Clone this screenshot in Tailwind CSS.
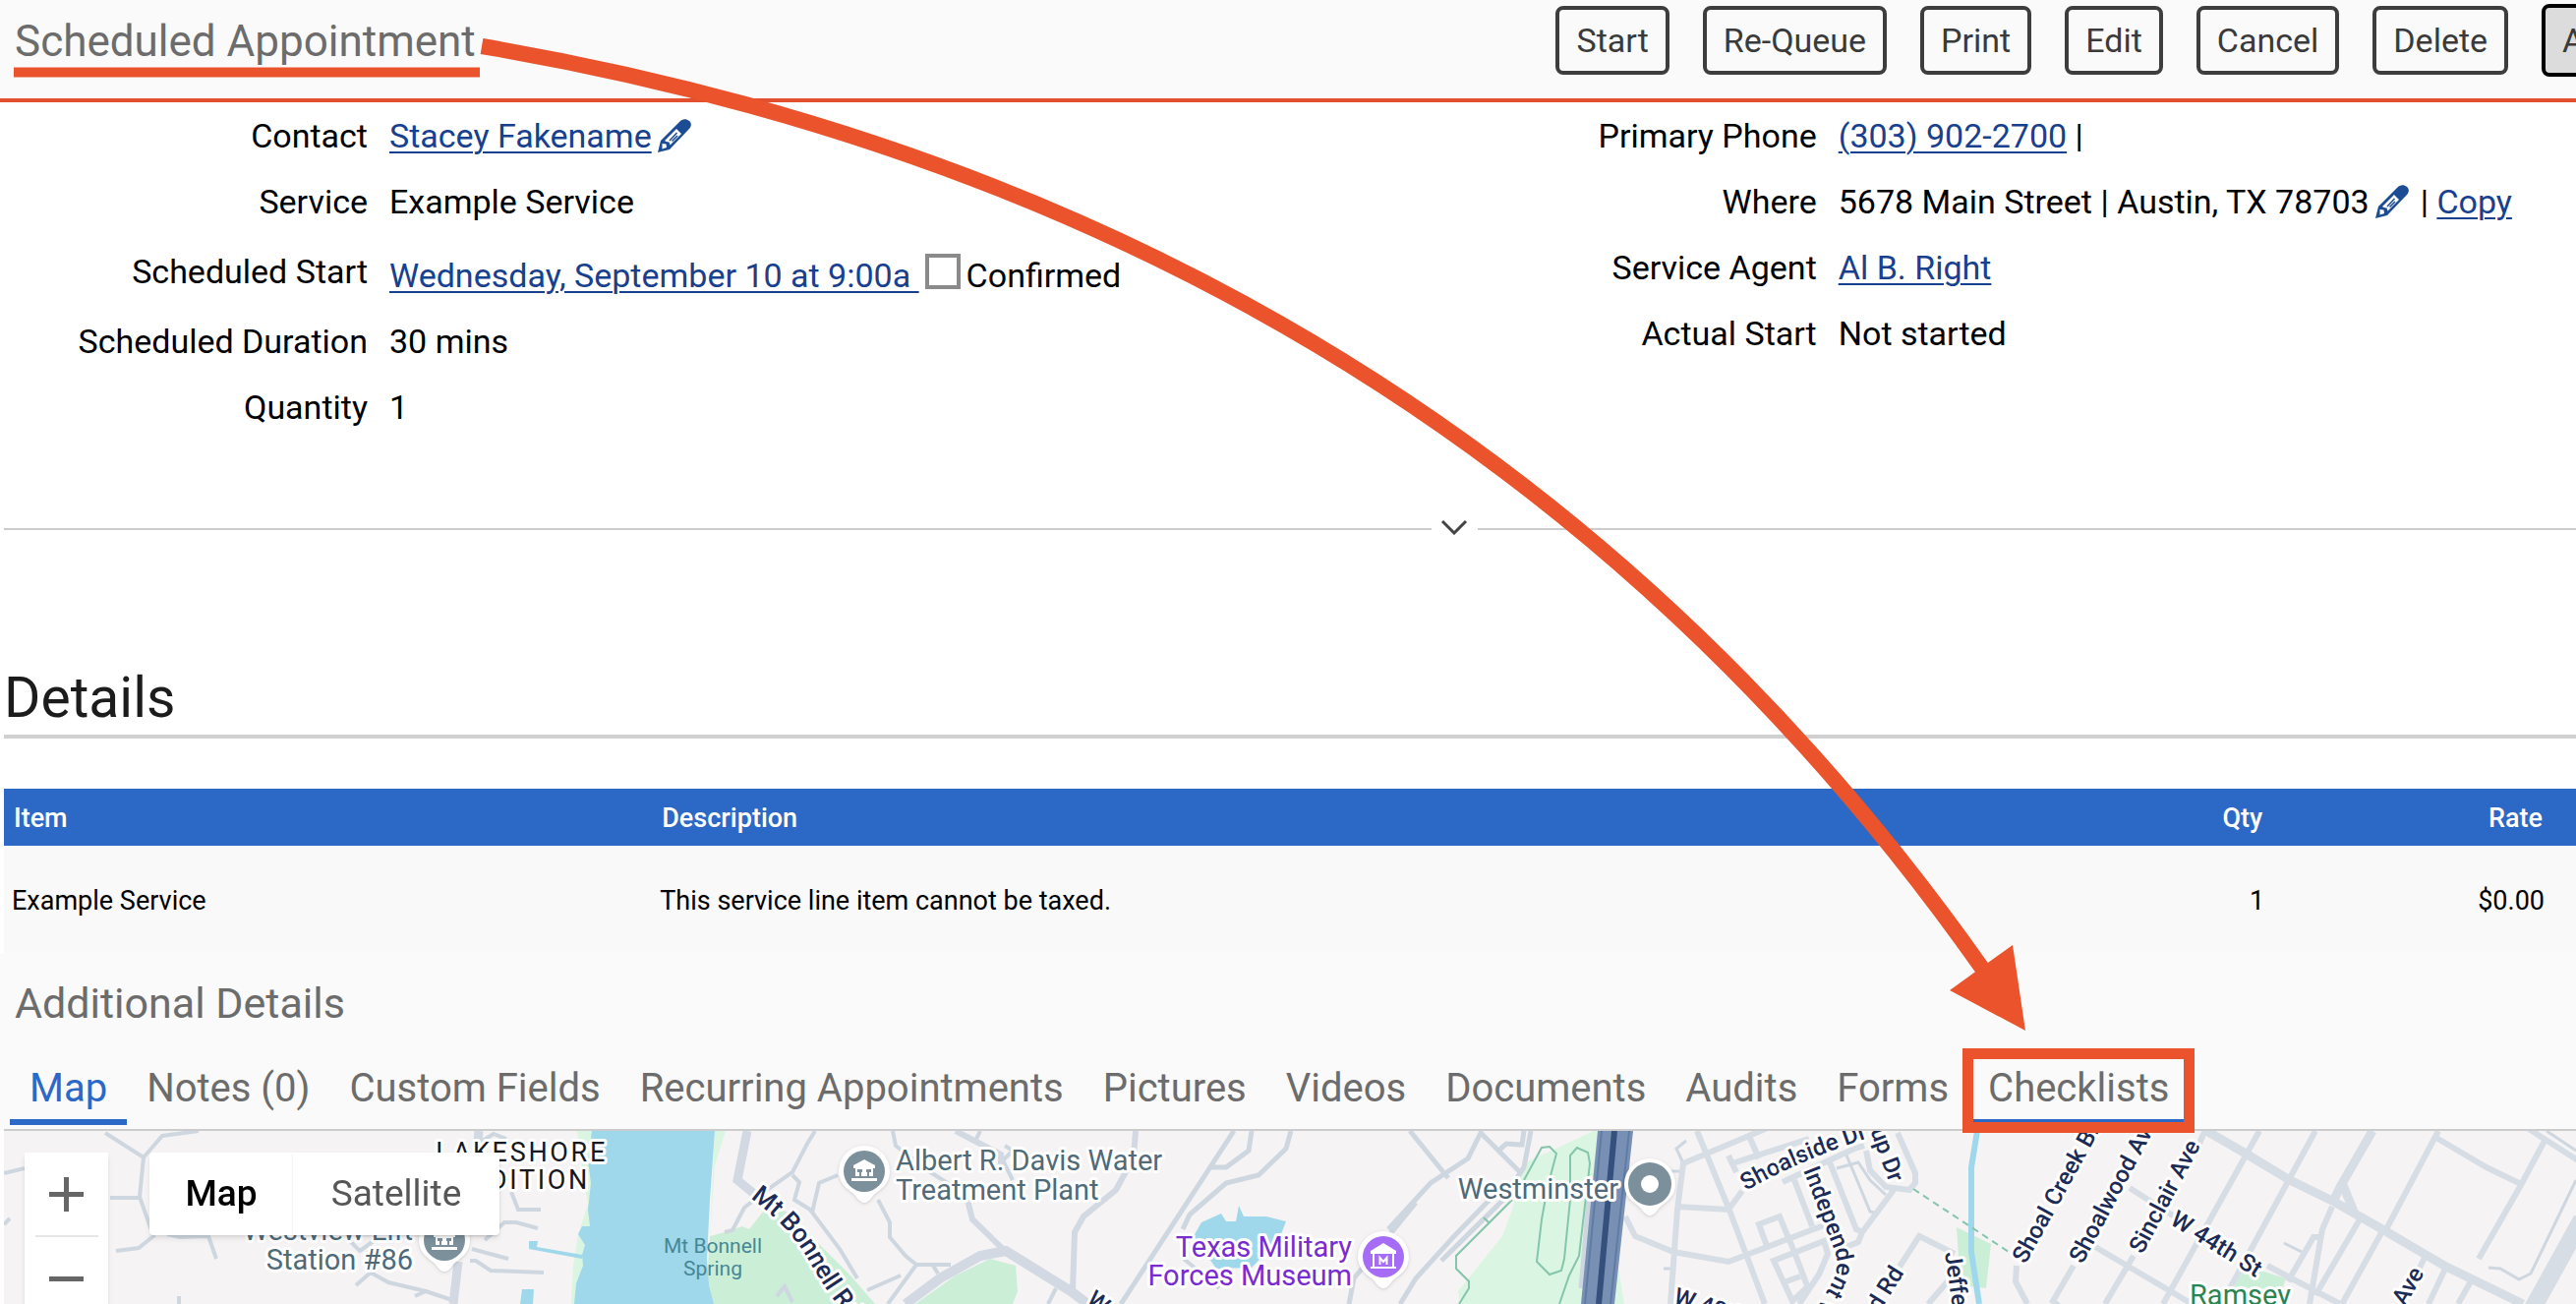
<!DOCTYPE html>
<html lang="en">
<head>
  <meta charset="UTF-8" />
  <meta name="viewport" content="width=device-width, initial-scale=1.0" />
  <title>Scheduled Appointment</title>
  <script src="https://cdn.jsdelivr.net/npm/@tailwindcss/browser@4"></script>
</head>
<body class="relative min-h-screen overflow-x-hidden bg-white font-[Roboto,sans-serif] text-[34px] leading-10 text-black">
  <!-- Icon shapes used more than once -->
  <svg class="hidden">
    <symbol id="pencil" viewBox="0 0 34 34">
      <path d="M0 34 3 22 22 3C25-.5 29-.5 32 2s2 6-.5 8.500L12 31Z" fill="#1c4c93" />
      <path d="M7 22 19 10l5 5L12.500 26.500l-1-3-3-.500Z" fill="#fff" />
      <path d="m12 22 7.500-8M14.500 22.500 20 17" stroke="#1c4c93" stroke-width="1.500" />
      <path d="m4.500 25 4 .500.500 3.500-4.500 1.500Z" fill="#fff" />
    </symbol>
    <symbol id="pin" viewBox="0 0 56 64">
      <path d="M28 2a26 26 0 0 1 26 26c0 11-7 17-14 22-4 3-7 10-12 10s-8-7-12-10C9 45 2 39 2 28A26 26 0 0 1 28 2Z" fill="#fff" />
    </symbol>
    <symbol id="civic" viewBox="0 0 26 24">
      <path d="M13 0 24 6v3H2V6ZM4 9h18v8H4ZM0 19h26v3H0Z" fill="#fff" />
      <path d="M6 10h5v3H6zM15 10h5v3h-5zM8 13h2v5H8zM16 13h2v5h-2z" fill="#7b909b" />
    </symbol>
  </svg>

  <header class="flex h-[104px] items-start overflow-hidden border-b-4 border-[#e2502f] bg-[#fafafa]">
    <h1 class="w-[60.4%] shrink-0 pl-[15px] pt-4 text-[44px] leading-[52px] text-[#6c6c6c]">Scheduled Appointment</h1>
    <div class="flex shrink-0 items-center gap-[34px] pt-1 text-[#3a3a3a]">
      <button class="h-[70px] rounded-lg border-4 border-[#3d3d3d] px-[17px]">Start</button>
      <button class="h-[70px] rounded-lg border-4 border-[#3d3d3d] px-[17px]">Re-Queue</button>
      <button class="h-[70px] rounded-lg border-4 border-[#3d3d3d] px-[17px]">Print</button>
      <button class="h-[70px] rounded-lg border-4 border-[#3d3d3d] px-[17px]">Edit</button>
      <button class="h-[70px] rounded-lg border-4 border-[#3d3d3d] px-[17px]">Cancel</button>
      <button class="h-[70px] rounded-lg border-4 border-[#3d3d3d] px-[17px]">Delete</button>
      <button class="h-[74px] rounded-lg border-4 border-black bg-[#dcdcdc] px-[17px]">Actions</button>
    </div>
  </header>

  <main>
    <section class="grid grid-cols-[56.25%_1fr] items-start">
      <dl>
        <div class="flex h-[67px] items-center gap-[22px]">
          <dt class="w-[374px] shrink-0 text-right">Contact</dt>
          <dd class="flex items-center gap-[6px]"><a href="#" class="text-[#17408f] underline decoration-2 underline-offset-4">Stacey Fakename</a><a href="#" aria-label="Edit contact"><svg class="size-[34px]"><use href="#pencil" /></svg></a></dd>
        </div>
        <div class="flex h-[67px] items-center gap-[22px]">
          <dt class="w-[374px] shrink-0 text-right">Service</dt>
          <dd>Example Service</dd>
        </div>
        <div class="flex h-[75px] items-center gap-[22px]">
          <dt class="w-[374px] shrink-0 text-right">Scheduled Start</dt>
          <dd class="flex items-center pt-2">
            <a href="#" class="whitespace-pre text-[#17408f] underline decoration-2 underline-offset-4">Wednesday, September 10 at 9:00a </a>
            <input id="confirmed" type="checkbox" class="mx-[6px] mb-2 size-9 appearance-none border-4 border-[#8a8a8a] bg-white" />
            <label for="confirmed">Confirmed</label>
          </dd>
        </div>
        <div class="flex h-[67px] items-center gap-[22px]">
          <dt class="w-[374px] shrink-0 text-right">Scheduled Duration</dt>
          <dd>30 mins</dd>
        </div>
        <div class="flex h-[67px] items-center gap-[22px]">
          <dt class="w-[374px] shrink-0 text-right">Quantity</dt>
          <dd>1</dd>
        </div>
      </dl>
      <dl>
        <div class="flex h-[67px] items-center gap-[22px]">
          <dt class="w-[374px] shrink-0 text-right">Primary Phone</dt>
          <dd><a href="#" class="text-[#17408f] underline decoration-2 underline-offset-4">(303) 902-2700</a> |</dd>
        </div>
        <div class="flex h-[67px] items-center gap-[22px]">
          <dt class="w-[374px] shrink-0 text-right">Where</dt>
          <dd class="flex items-center whitespace-nowrap">5678 Main Street | Austin, TX 78703<a href="#" aria-label="Edit address" class="ml-[6px] mr-3"><svg class="size-[34px]"><use href="#pencil" /></svg></a><span>| <a href="#" class="text-[#17408f] underline decoration-2 underline-offset-4">Copy</a></span></dd>
        </div>
        <div class="flex h-[67px] items-center gap-[22px]">
          <dt class="w-[374px] shrink-0 text-right">Service Agent</dt>
          <dd><a href="#" class="text-[#17408f] underline decoration-2 underline-offset-4">Al B. Right</a></dd>
        </div>
        <div class="flex h-[67px] items-center gap-[22px]">
          <dt class="w-[374px] shrink-0 text-right">Actual Start</dt>
          <dd>Not started</dd>
        </div>
      </dl>
    </section>

    <!-- Expand divider -->
    <div class="mt-[77px] flex h-7 items-center pl-1">
      <span class="h-[2px] w-[55.5%] bg-[#cccccc]"></span>
      <button aria-label="Show more" class="flex w-[47px] justify-center pb-1">
        <svg class="h-4 w-7" viewBox="0 0 28 16" fill="none" stroke="#444" stroke-width="3"><path d="m2 2 12 12L26 2" /></svg>
      </button>
      <span class="h-[2px] flex-1 bg-[#cccccc]"></span>
    </div>

    <section class="pl-1 pt-[124px]">
      <h2 class="border-b-4 border-[#d0d0d0] pb-1 text-[57px] leading-[67px] text-[#1c1c1c]">Details</h2>
      <table class="mt-[51px] w-full table-fixed text-[27px]">
        <colgroup>
          <col class="w-[25.2%]" />
          <col class="w-[50.4%]" />
          <col class="w-[12.6%]" />
          <col class="w-[11.8%]" />
        </colgroup>
        <thead>
          <tr class="h-[58px] bg-[#2c68c5] text-left text-white">
            <th class="px-[10px] pt-[2px] font-medium">Item</th>
            <th class="px-[10px] pt-[2px] font-medium">Description</th>
            <th class="px-[10px] pt-[2px] text-right font-medium">Qty</th>
            <th class="px-[34px] pt-[2px] text-right font-medium">Rate</th>
          </tr>
        </thead>
        <tbody>
          <tr class="h-[109px] bg-[#f9f9f9]">
            <td class="px-2 pt-[2px]">Example Service</td>
            <td class="px-2 pt-[2px]">This service line item cannot be taxed.</td>
            <td class="px-2 pt-[2px] text-right">1</td>
            <td class="px-8 pt-[2px] text-right">$0.00</td>
          </tr>
        </tbody>
      </table>
    </section>

    <section class="bg-[#fafafa]">
      <h2 class="h-[99px] pl-[15px] pt-[25px] text-[43px] leading-[52px] text-[#6c6c6c]">Additional Details</h2>
      <nav class="ml-1 flex h-[82px] items-start border-b-2 border-[#cccccc] pl-[6px] text-[40px] text-[#6c6c6c]">
        <a href="#" class="h-[76px] border-b-[6px] border-[#2c68c5] px-5 pt-4 leading-[46px] text-[#2c68c5]">Map</a>
        <a href="#" class="h-[76px] px-5 pt-4 leading-[46px]">Notes (0)</a>
        <a href="#" class="h-[76px] px-5 pt-4 leading-[46px]">Custom Fields</a>
        <a href="#" class="h-[76px] px-5 pt-4 leading-[46px]">Recurring Appointments</a>
        <a href="#" class="h-[76px] px-5 pt-4 leading-[46px]">Pictures</a>
        <a href="#" class="h-[76px] px-5 pt-4 leading-[46px]">Videos</a>
        <a href="#" class="h-[76px] px-5 pt-4 leading-[46px]">Documents</a>
        <a href="#" class="h-[76px] px-5 pt-4 leading-[46px]">Audits</a>
        <a href="#" class="h-[76px] px-5 pt-4 leading-[46px]">Forms</a>
        <a href="#" class="relative h-[76px] border-b-[6px] border-[#2c68c5] px-5 pt-4 leading-[46px]">Checklists<span class="absolute -inset-x-[6px] -top-[2px] z-10 h-[86px] border-[11px] border-[#ea532c]"></span></a>
      </nav>
    </section>

    <!-- Map -->
    <section class="relative ml-1 h-44 overflow-hidden bg-[#f5f3f4]">
      <svg class="h-[176px] w-[2616px] font-[Roboto,sans-serif]" viewBox="4 1150 2616 176" fill="none">
        <!-- parks -->
        <path d="M780 1227 800 1232 830 1262 865 1297 890 1326H726L719 1303 722 1257 737 1253 755 1247 762 1250ZM931 1326 972 1297 1007 1280 1033 1287 1035 1313 1030 1326ZM1990 1248 2025 1265 2020 1310 1994 1307ZM2284 1287 2325 1300 2321 1312 2272 1309Z" fill="#cbeed7" />
        <path d="M1621 1150 1550 1183 1538 1230 1528 1257 1483 1313 1485 1326H1612L1625 1150ZM587 1150H602V1326H581L583 1287 588 1255 598 1225 594 1200ZM727 1150H738L727 1185 722 1260ZM1646 1290 1640 1326H1652Z" fill="#daf6e2" />
        <!-- water -->
        <path d="M602 1150H727L722 1220 719 1280 721 1307 726 1326H584L586 1305 593 1287 592 1276 595 1266 588 1255 592 1247H600L598 1230 601 1203 598 1180ZM1214 1257 1222 1243 1242 1234 1247 1242H1257L1260 1226 1265 1237H1288L1308 1242 1301 1260 1273 1289 1237 1290ZM531 1311H543L542 1326H529ZM538 1262H547L546 1268 592 1276V1280L538 1270Z" fill="#9fd8eb" />
        <path d="M2011 1150 2005 1187V1273L2013 1326" stroke="#9fd8eb" stroke-width="6" />
        <!-- small streets -->
        <g stroke="#ced7e0" stroke-width="4">
          <path d="M107 1152 146 1177 165 1155 202 1150M146 1177 142 1217 156 1257 141 1269 118 1272M112 1218H142M4 1193 25 1188M4 1245 10 1239M170 1255 183 1258 212 1257 220 1280M486 1163 502 1153 515 1158M520 1212 527 1230H550M493 1261 513 1243H525L547 1249M480 1270 517 1280M478 1282H484L499 1292 553 1294M362 1307 377 1294 395 1304 433 1313 460 1322M422 1318 433 1313M182 1318V1326M357 1263 366 1272 380 1262" />
          <path d="M829 1150 821 1163 806 1192 780 1210 757 1228 745 1251 737 1253M806 1195 813 1202 808 1220 824 1230 854 1270 872 1300M826 1233 833 1203 852 1195M893 1220 905 1243V1258L921 1277 932 1286H967M932 1286 903 1326M916 1297 882 1312M949 1287 954 1295M908 1150 911 1165 940 1188 970 1207M992 1160 997 1150M1022 1165 1030 1170 1020 1180 1030 1200M790 1318 798 1308 806 1324M1066 1326 1074 1310M1204 1280 1240 1310" />
          <path d="M1255 1150 1140 1326M1273 1150 1270 1170 1247 1187H1229M1313 1150 1308 1168 1280 1195 1247 1203 1210 1235 1203 1250M1440 1223 1377 1300 1372 1326M1434 1150 1473 1198M1507 1150 1493 1178 1455 1203 1412 1250M1507 1153 1546 1192M1524 1170 1532 1163 1548 1164 1550 1150M1557 1150 1550 1187 1538 1205M1515 1220 1479 1257 1440 1300 1424 1326M1534 1215 1466 1282M1616 1220 1608 1310" stroke-width="5" />
          <path d="M1712 1183 1705 1168 1715 1160M1710 1191H1700M1692 1290H1699M1876 1170 1890 1203 1902 1232 1910 1234M1868 1188 1890 1182 1902 1200 1918 1215M2323 1264 2341 1273M2531 1289 2543 1290 2562 1301 2574 1295 2620 1200M2590 1150 2620 1170" stroke-width="3" />
        </g>
        <!-- main streets -->
        <g stroke="#d7dde4" stroke-width="6">
          <path d="M487 1150 485 1172M466 1283 461 1326M760 1150 750 1200 767 1214" stroke-width="9" stroke="#d2d9e2" />
          <path d="M972 1150 1018 1174V1190M984 1220 989 1240 1020 1270M1155 1150 1153 1177 1135 1210 1102 1237 1093 1253 1091 1312" stroke="#d2d9e2" />
          <path d="M921 1326 956 1300 997 1277 1023 1272 1089 1313 1109 1328" stroke-width="10" stroke="#d2d9e2" />
          <path d="M1653 1237 1663 1257 1702 1273 1758 1283 1855 1246M1726 1150 1758 1228 1795 1326M1800 1146 1712 1183 1706 1230 1699 1326M1706 1227 1758 1230 1772 1211M1778 1153 1789 1178M1762 1183 1840 1158M1758 1175 1766 1192M1813 1202 1886 1168 1896 1165M1825 1200 1843 1247M1861 1182 1888 1250 1894 1253 1926 1210M1894 1253 1890 1263 1878 1268M1898 1170 1902 1190 1918 1207 1942 1210 1948 1203V1193L1930 1152M1797 1267 1789 1245 1810 1237 1825 1273 1839 1310M1837 1310 1823 1323 1804 1282 1855 1262 1859 1275 1850 1296 1830 1326M1817 1303 1831 1298M1932 1288 1952 1257 1988 1275M1961 1326 1981 1303" />
          <path d="M2298 1150 2200 1326M2355 1150 2268 1310M2241 1153 2232 1175M2170 1277 2141 1326M2109 1287 2088 1323 2094 1328M2051 1287 2050 1303 2062 1326M2131 1268 2228 1325M2166 1208 2213 1238M2306 1287 2380 1326M2372 1227 2362 1250 2349 1326M2360 1258H2353L2327 1303M2400 1240 2355 1317M2423 1252 2382 1326M2468 1275 2458 1295M2488 1288 2470 1326M2513 1303 2500 1326M2480 1150 2427 1250M2478 1157 2529 1187 2564 1204M2588 1160 2564 1205 2521 1280M2572 1148 2622 1180" />
          <path d="M2241 1148 2284 1173 2329 1200 2374 1222 2423 1250 2486 1287 2566 1326M2413 1150 2380 1207 2373 1222M2383 1205 2394 1232" stroke-width="9" />
          <path d="M2626 1240 2574 1334" stroke-width="18" />
        </g>
        <!-- trails -->
        <path d="M1538 1220 1481 1277V1290L1494 1303V1310L1484 1326M1509 1238 1515 1244M1550 1200 1568 1167 1576 1166 1583 1173 1574 1207 1568 1240 1563 1283 1576 1296 1588 1292 1591 1280 1597 1220V1175L1604 1167 1615 1172 1617 1183 1606 1277 1596 1297 1586 1326" stroke="#84c5ab" stroke-width="2" />
        <path d="M1946 1209 2043 1273" stroke="#84c5ab" stroke-width="2" stroke-dasharray="7 5" />
        <!-- expressway -->
        <path d="M1625 1150H1661L1642 1326H1608Z" fill="#7890b3" />
        <path d="M1629 1150 1612 1326M1657 1150 1638 1326" stroke="#5f7ba6" stroke-width="2" />
        <path d="M1642 1150 1626 1326" stroke="#35507c" stroke-width="6" />

        <!-- place labels -->
        <g class="text-[29px]" stroke="#fff" stroke-width="6" stroke-linejoin="round" paint-order="stroke">
          <g fill="#15181f" class="text-[27px] tracking-widest" text-anchor="end">
            <text x="618" y="1181">LAKESHORE</text>
            <text x="600" y="1209">ADDITION</text>
          </g>
          <g fill="#4f6a78">
            <text x="420" y="1261" text-anchor="end">Westview Lift</text>
            <text x="420" y="1291" text-anchor="end">Station #86</text>
            <text x="911" y="1190">Albert R. Davis Water</text>
            <text x="911" y="1220">Treatment Plant</text>
            <text x="1646" y="1219" text-anchor="end">Westminster</text>
          </g>
          <g fill="#7a2bd0" text-anchor="end">
            <text x="1375" y="1278">Texas Military</text>
            <text x="1375" y="1307">Forces Museum</text>
          </g>
          <text x="2227" y="1327" fill="#2a8552">Ramsey</text>
        </g>
        <g fill="#468795" class="text-[21px]" text-anchor="middle">
          <text x="725" y="1274">Mt Bonnell</text>
          <text x="725" y="1297">Spring</text>
        </g>

        <!-- street names -->
        <path id="bonnell" d="M763 1218Q804 1248 824 1284T872 1352" />
        <path id="independent" d="M1834 1190 1866 1272Q1872 1290 1862 1306L1840 1345" />
        <path id="shoalside" d="M1776 1211Q1825 1182 1900 1157" />
        <g fill="#1b2b55" class="text-[24px] font-medium" stroke="#fff" stroke-width="6" stroke-linejoin="round" paint-order="stroke">
          <text class="text-[26px]"><textPath href="#bonnell">Mt Bonnell Rd</textPath></text>
          <text><textPath href="#independent">Independent W</textPath></text>
          <text><textPath href="#shoalside">Shoalside Dr</textPath></text>
          <text transform="translate(1898 1138) rotate(70)">cup Dr</text>
          <text transform="translate(1978 1274) rotate(82)">Jefferson</text>
          <text transform="translate(1937 1294) rotate(-58)" text-anchor="end">land Rd</text>
          <text transform="translate(1701 1325) rotate(18)">W 48th St</text>
          <text transform="translate(1104 1324) rotate(38)">W 45th St</text>
          <text transform="translate(2060 1286) rotate(-61)">Shoal Creek Blvd</text>
          <text transform="translate(2118 1286) rotate(-62)">Shoalwood Ave</text>
          <text transform="translate(2179 1276) rotate(-62)">Sinclair Ave</text>
          <text transform="translate(2206 1244) rotate(32)">W 44th St</text>
          <text transform="translate(2446 1329) rotate(-60)">Ave</text>
        </g>

        <!-- pins -->
        <g class="drop-shadow">
          <use href="#pin" x="424" y="1233" width="56" height="64" />
          <use href="#pin" x="851" y="1163" width="56" height="64" />
          <use href="#pin" x="1379" y="1250" width="56" height="64" />
          <use href="#pin" x="1650" y="1176" width="56" height="64" />
        </g>
        <g fill="#7b909b">
          <circle cx="452" cy="1261" r="21" />
          <circle cx="879" cy="1191" r="21" />
          <circle cx="1678" cy="1204" r="22" />
          <circle cx="1407" cy="1278" r="21" fill="#a66cf5" />
        </g>
        <circle cx="1678" cy="1204" r="9" fill="#fff" />
        <use href="#civic" x="439" y="1249" width="26" height="24" />
        <use href="#civic" x="866" y="1179" width="26" height="24" />
        <path d="M1407 1264 1420 1272V1275H1394V1272ZM1394 1288H1420V1290H1394Z" fill="#fff" />
        <path d="M1397 1275V1289M1417 1275V1289M1403.500 1286V1279L1407 1283 1410.500 1279V1286" stroke="#fff" stroke-width="2" />
      </svg>

      <div class="absolute left-[21px] top-[22px] flex w-[85px] flex-col items-center bg-white shadow-md">
        <button aria-label="Zoom in" class="flex h-[84px] w-full items-center justify-center"><svg class="size-[35px]" viewBox="0 0 35 35" stroke="#666" stroke-width="5"><path d="M17.500 0v35M0 17.500h35" /></svg></button>
        <span class="h-[2px] w-16 bg-[#e6e6e6]"></span>
        <button aria-label="Zoom out" class="flex h-[84px] w-full items-center justify-center"><svg class="size-[35px]" viewBox="0 0 35 35" stroke="#666" stroke-width="5"><path d="M0 17.500h35" /></svg></button>
      </div>
      <div class="absolute left-[148px] top-[22px] flex h-[84px] rounded bg-white text-[37px] shadow-md">
        <button class="w-[146px] rounded-l font-medium">Map</button>
        <button class="w-[210px] rounded-r text-[#565656] shadow">Satellite</button>
      </div>
    </section>
  </main>

  <!-- Callout from the title to the Checklists tab -->
  <svg class="pointer-events-none absolute left-0 top-0 h-[1326px] w-full" fill="none">
    <path d="M14 73.500H488" stroke="#ea532c" stroke-width="10" />
    <path d="M490 47Q1473 214 2017 986" stroke="#ea532c" stroke-width="16" />
    <path d="M2060 1048 1983 1007 2047 961Z" fill="#ea532c" />
  </svg>
</body>
</html>
